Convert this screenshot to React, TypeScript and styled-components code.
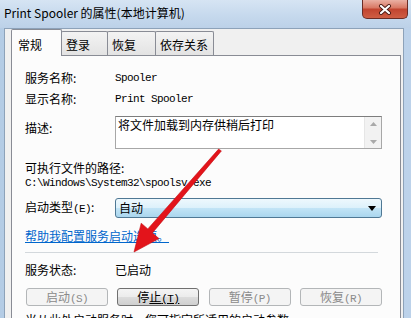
import React from 'react'
import styled, { createGlobalStyle } from 'styled-components'

const CJK = `"Noto Sans CJK SC", "Noto Sans", sans-serif`
const MONO = `"Liberation Mono", "Noto Sans CJK SC", monospace`

const GlobalStyle = createGlobalStyle`
  html, body { margin: 0; padding: 0; }
  body { width: 411px; height: 318px; overflow: hidden; background: #f0f0f0; }
`

const Window = styled.div`
  position: relative;
  width: 411px;
  height: 318px;
  overflow: hidden;
  display: flex;
  flex-direction: column;
  background: linear-gradient(90deg, #b4cce5, #c7daee 45%, #bcd2ea);
  font-family: ${CJK};
  font-size: 12px;
  color: #000;
`

const TitleBar = styled.div`
  height: 28px;
  flex: none;
  display: flex;
  align-items: flex-start;
  background: linear-gradient(180deg, #d6e4f3 0%, #c6d9ed 55%, #bcd1e8 100%);
`

const Title = styled.div`
  padding: 5px 0 0 4px;
  line-height: 16px;
  font-size: 12px;
  color: #000;
`

const CloseButton = styled.div`
  margin-left: auto;
  margin-right: 3px;
  width: 46px;
  height: 19px;
  box-sizing: border-box;
  border: 1px solid #6a2d26;
  border-top: none;
  border-radius: 0 0 5px 5px;
  background: linear-gradient(180deg, #eab0a3 0%, #d97a66 42%, #c24530 52%, #cf5e44 100%);
  display: flex;
  align-items: center;
  justify-content: center;
`

const Client = styled.div`
  flex: 1;
  min-height: 0;
  margin: 0 7px 0 4px;
  background: #f0f0f0;
  border: 1px solid #8da2b9;
  border-bottom: none;
  padding: 0 2px 0 6px;
  display: flex;
  flex-direction: column;
`

const TabStrip = styled.div`
  height: 26px;
  flex: none;
  display: flex;
  align-items: flex-end;
`

const Tab = styled.div<{ $active?: boolean; $w: number }>`
  position: relative;
  box-sizing: border-box;
  width: ${p => p.$w}px;
  height: ${p => (p.$active ? 27 : 24)}px;
  margin-bottom: ${p => (p.$active ? -1 : 0)}px;
  margin-left: ${p => (p.$active ? 0 : -1)}px;
  z-index: ${p => (p.$active ? 1 : 0)};
  border: 1px solid #898c95;
  border-bottom: none;
  border-radius: 2px 2px 0 0;
  background: ${p => (p.$active ? '#fcfcfc' : 'linear-gradient(180deg, #f3f3f3, #e3e3e3)')};
  padding: ${p => (p.$active ? '7px 0 0 6px' : '5px 0 0 4px')};
  line-height: 16px;
  white-space: nowrap;
`

const Panel = styled.div`
  flex: 1;
  background: #fcfcfc;
  border: 1px solid #898c95;
  border-bottom: none;
  padding: 14px 17px 0 13px;
`

const Row = styled.div<{ $mt: number; $top?: boolean }>`
  display: flex;
  align-items: ${p => (p.$top ? 'flex-start' : 'center')};
  margin-top: ${p => p.$mt}px;
`

const Label = styled.div<{ $mt?: number }>`
  width: 90px;
  flex: none;
  line-height: 16px;
  margin-top: ${p => p.$mt || 0}px;
  white-space: nowrap;
`

const Line = styled.div<{ $mt: number }>`
  margin-top: ${p => p.$mt}px;
  line-height: 15px;
  white-space: nowrap;
`

const Mono = styled.span`
  font-family: ${MONO};
  font-size: 11px;
  letter-spacing: -0.6px;
`

const Value = styled.div`
  font-family: ${MONO};
  font-size: 11px;
  letter-spacing: -0.6px;
  line-height: 16px;
  white-space: nowrap;
`

const DescBox = styled.div`
  width: 267px;
  height: 33px;
  box-sizing: border-box;
  border: 1px solid #a7a7a7;
  border-top-color: #7d7d7d;
  background: #fff;
  display: flex;
`

const DescText = styled.div`
  flex: 1;
  padding: 0 2px;
  line-height: 15px;
`

const ScrollBar = styled.div`
  width: 16px;
  flex: none;
  background: #f2f2f2;
  border-left: 1px solid #e6e6e6;
  display: flex;
  flex-direction: column;
  justify-content: space-between;
  align-items: center;
  padding: 5px 0 4px;
`

const Combo = styled.div`
  width: 267px;
  height: 20px;
  box-sizing: border-box;
  border: 1px solid #4f7894;
  border-radius: 3px;
  background: linear-gradient(180deg, #eef8fd 0%, #ddf1fb 48%, #c2e4f6 52%, #aad6ee 100%);
  display: flex;
  align-items: center;
  padding: 0 5px 0 3px;
  line-height: 16px;
`

const ComboText = styled.div`
  flex: 1;
`

const Link = styled.div`
  margin-top: 10px;
  line-height: 16px;
  color: #0066cc;
  text-decoration: underline;
`

const Separator = styled.div`
  margin-top: 8px;
  width: 353px;
  height: 1px;
  background: #d3d8dc;
`

const ButtonRow = styled.div`
  margin-top: 10px;
  margin-left: 1px;
  width: 356px;
  display: flex;
  justify-content: space-between;
`

const Button = styled.div<{ $disabled?: boolean }>`
  width: 82px;
  height: 18px;
  box-sizing: border-box;
  border: 1px solid ${p => (p.$disabled ? '#b3b6b8' : '#707070')};
  border-radius: 3px;
  background: ${p =>
    p.$disabled
      ? '#f4f4f4'
      : 'linear-gradient(180deg, #f4f4f4 0%, #ececec 48%, #dcdcdc 52%, #cfcfcf 100%)'};
  color: ${p => (p.$disabled ? '#8a8a8a' : '#000')};
  text-align: center;
  line-height: 16px;
  white-space: nowrap;
`

const Under = styled.span`
  text-decoration: underline;
`

const Footer = styled.div`
  margin-top: 6px;
  line-height: 16px;
  white-space: nowrap;
`

const Overlay = styled.svg`
  position: absolute;
  left: 0;
  top: 0;
  pointer-events: none;
`

export default function App() {
  return (
    <Window>
      <GlobalStyle />
      <TitleBar>
        <Title>Print Spooler 的属性(本地计算机)</Title>
        <CloseButton>
          <svg width="14" height="11" viewBox="0 0 14 11">
            <path d="M3 2 L11 9 M11 2 L3 9" stroke="#4a1a14" strokeWidth="4" strokeLinecap="round" />
            <path d="M3 2 L11 9 M11 2 L3 9" stroke="#fff" strokeWidth="2.2" strokeLinecap="round" />
          </svg>
        </CloseButton>
      </TitleBar>
      <Client>
        <TabStrip>
          <Tab $active $w={51}>常规</Tab>
          <Tab $w={47}>登录</Tab>
          <Tab $w={49}>恢复</Tab>
          <Tab $w={59}>依存关系</Tab>
        </TabStrip>
        <Panel>
          <Row $mt={0}>
            <Label>服务名称:</Label>
            <Value>Spooler</Value>
          </Row>
          <Row $mt={5}>
            <Label>显示名称:</Label>
            <Value>Print Spooler</Value>
          </Row>
          <Row $mt={9} $top>
            <Label $mt={4}>描述:</Label>
            <DescBox>
              <DescText>将文件加载到内存供稍后打印</DescText>
              <ScrollBar>
                <svg width="7" height="4" viewBox="0 0 7 4"><polygon points="0,4 3.5,0 7,4" fill="#a9a9a9" /></svg>
                <svg width="7" height="4" viewBox="0 0 7 4"><polygon points="0,0 3.5,4 7,0" fill="#a9a9a9" /></svg>
              </ScrollBar>
            </DescBox>
          </Row>
          <Line $mt={11}>可执行文件的路径:</Line>
          <Value>C:\Windows\System32\spoolsv.exe</Value>
          <Row $mt={7}>
            <Label>启动类型<Mono>(E)</Mono>:</Label>
            <Combo>
              <ComboText>自动</ComboText>
              <svg width="8" height="5" viewBox="0 0 8 5"><polygon points="0,0 8,0 4,5" fill="#000" /></svg>
            </Combo>
          </Row>
          <Link>帮助我配置服务启动选项。</Link>
          <Separator />
          <Row $mt={8}>
            <Label>服务状态:</Label>
            <div>已启动</div>
          </Row>
          <ButtonRow>
            <Button $disabled>启动<Mono>(S)</Mono></Button>
            <Button>停<Under>止<Mono>(T)</Mono></Under></Button>
            <Button $disabled>暂停<Mono>(P)</Mono></Button>
            <Button $disabled>恢复<Mono>(R)</Mono></Button>
          </ButtonRow>
          <Footer>当从此处启动服务时，您可指定所适用的启动参数。</Footer>
        </Panel>
      </Client>
      <Overlay width="411" height="318" viewBox="0 0 411 318">
        <polygon
          points="221.4,150.9 152.4,232.9 159,238.6 134,252 141.2,223.2 147.8,228.9 218.6,149.1"
          fill="#e3141b"
          stroke="#c40f15"
          strokeWidth="0.6"
          strokeLinejoin="round"
        />
      </Overlay>
    </Window>
  )
}
